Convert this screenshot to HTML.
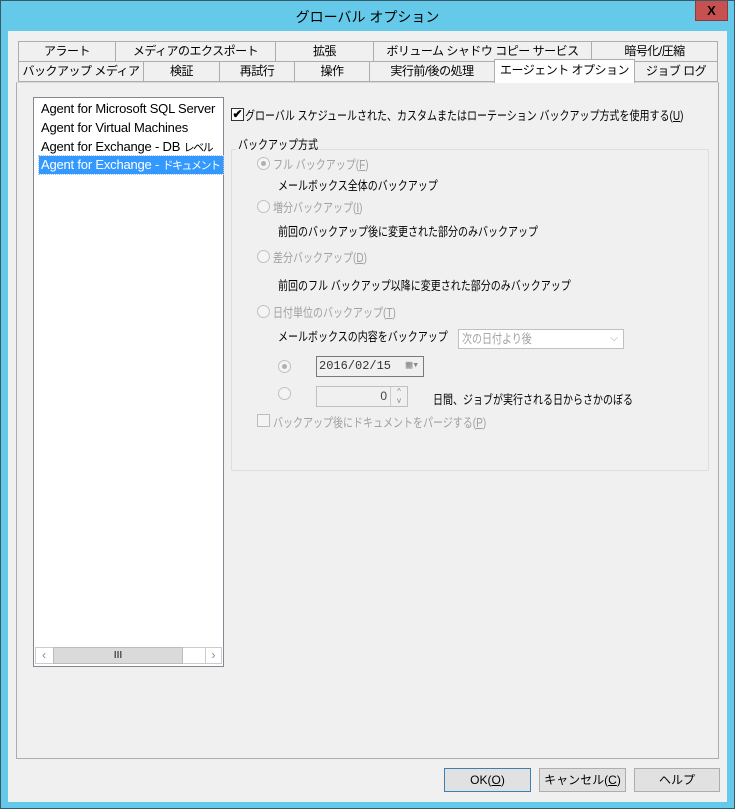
<!DOCTYPE html>
<html><head><meta charset="utf-8">
<style>
*{box-sizing:border-box;margin:0;padding:0}
body{width:735px;height:809px;position:relative;overflow:hidden;background:#65c9ea;font:12px "Liberation Sans","Noto Sans CJK JP",sans-serif;color:#000}
.a{position:absolute;white-space:nowrap}
.s{transform:scaleX(.8);transform-origin:0 0;font-size:12.5px}
.frame{left:0;top:0;width:735px;height:809px;border:1px solid #3a5a6a;background:#65c9ea}
.title{left:0;top:7px;width:735px;text-align:center;font-size:14px}
.close{left:695px;top:1px;width:33px;height:20px;background:#c75050;color:#000;font-weight:bold;text-align:center;line-height:20px;font-size:13px;border:1px solid #8e3a3a;border-top:none}
.client{left:8px;top:31px;width:719px;height:771px;background:#f0f0f0}
.tab{position:absolute;height:21px;border:1px solid #adadad;background:#f0f0f0;text-align:center;line-height:19px;font-size:12px;letter-spacing:-0.5px}
.panel{left:16px;top:82px;width:703px;height:677px;border:1px solid #adadad;border-top-color:#d9d9d9;background:#f0f0f0}
.list{left:33px;top:97px;width:191px;height:570px;border:1px solid #828790;background:#fff}
.item{position:absolute;left:7px;height:18px;line-height:18px;font-size:13px;letter-spacing:-0.2px}
.item span{font-size:11px;letter-spacing:-1.5px}
.dis{color:#a0a0a0}
.radio{position:absolute;width:13px;height:13px;border:1px solid #c0c0c0;border-radius:50%;background:#f4f4f4}
.radio.on::after{content:"";position:absolute;left:3px;top:3px;width:5px;height:5px;border-radius:50%;background:#b0b0b0}
.btn{position:absolute;top:768px;height:24px;border:1px solid #adadad;background:#e1e1e1;text-align:center;line-height:22px}
u{text-decoration:underline}
</style></head><body>
<div class="a frame"></div>
<div class="a title">グローバル オプション</div>
<div class="a close">X</div>
<div class="a client"></div>

<div class="tab" style="left:18px;top:41px;width:98px">アラート</div>
<div class="tab" style="left:115px;top:41px;width:161px">メディアのエクスポート</div>
<div class="tab" style="left:275px;top:41px;width:99px">拡張</div>
<div class="tab" style="left:373px;top:41px;width:219px">ボリューム シャドウ コピー サービス</div>
<div class="tab" style="left:591px;top:41px;width:127px">暗号化/圧縮</div>
<div class="tab" style="left:18px;top:61px;width:126px">バックアップ メディア</div>
<div class="tab" style="left:143px;top:61px;width:77px">検証</div>
<div class="tab" style="left:219px;top:61px;width:76px">再試行</div>
<div class="tab" style="left:294px;top:61px;width:76px">操作</div>
<div class="tab" style="left:369px;top:61px;width:126px">実行前/後の処理</div>
<div class="tab" style="left:634px;top:61px;width:84px">ジョブ ログ</div>

<div class="a panel"></div>
<div class="tab" style="left:494px;top:59px;width:141px;height:24px;background:#fff;border-bottom:none;line-height:21px">エージェント オプション</div>

<div class="a list">
 <div class="item" style="top:2px">Agent for Microsoft SQL Server</div>
 <div class="item" style="top:21px">Agent for Virtual Machines</div>
 <div class="item" style="top:40px">Agent for Exchange - DB <span>レベル</span></div>
 <div class="item" style="top:58px;left:5px;width:184px;background:#3399ff;color:#fff;outline:1px dotted #a0c8ff;padding-left:2px;overflow:hidden">Agent for Exchange - <span>ドキュメント</span></div>
 <div style="position:absolute;left:1px;top:549px;width:187px;height:17px;border:1px solid #ccc;background:#fff">
  <div style="position:absolute;left:0;top:0;width:16px;height:15px;color:#888;text-align:center;line-height:15px">‹</div>
  <div style="position:absolute;left:17px;top:-1px;width:130px;height:17px;background:#dadada;border:1px solid #bcbcbc;text-align:center;line-height:15px;color:#555;font-size:10px;font-weight:bold">III</div>
  <div style="position:absolute;right:0;top:0;width:16px;height:15px;color:#888;text-align:center;line-height:15px;border-left:1px solid #ccc">›</div>
 </div>
</div>

<div class="a" style="left:231px;top:108px;width:13px;height:13px;border:1px solid #333;background:#fff;font-size:12px;line-height:11px;text-align:center;font-weight:bold">✔</div>
<div class="a s" style="left:245px;top:105px">グローバル スケジュールされた、カスタムまたはローテーション バックアップ方式を使用する(<u>U</u>)</div>

<div class="a" style="left:231px;top:149px;width:478px;height:322px;border:1px solid #d5dfe5;border-radius:2px"></div>
<div class="a" style="left:236px;top:143px;width:56px;height:10px;background:#f0f0f0"></div>
<div class="a s" style="left:238px;top:134px">バックアップ方式</div>

<div class="radio on" style="left:257px;top:157px"></div>
<div class="a dis s" style="left:273px;top:154px">フル バックアップ(<u>F</u>)</div>
<div class="a s" style="left:278px;top:175px">メールボックス全体のバックアップ</div>

<div class="radio" style="left:257px;top:200px"></div>
<div class="a dis s" style="left:273px;top:197px">増分バックアップ(<u>I</u>)</div>
<div class="a s" style="left:278px;top:221px">前回のバックアップ後に変更された部分のみバックアップ</div>

<div class="radio" style="left:257px;top:250px"></div>
<div class="a dis s" style="left:273px;top:247px">差分バックアップ(<u>D</u>)</div>
<div class="a s" style="left:278px;top:275px">前回のフル バックアップ以降に変更された部分のみバックアップ</div>

<div class="radio" style="left:257px;top:305px"></div>
<div class="a dis s" style="left:273px;top:302px">日付単位のバックアップ(<u>T</u>)</div>
<div class="a s" style="left:278px;top:326px">メールボックスの内容をバックアップ</div>
<div class="a dis" style="left:458px;top:329px;width:166px;height:20px;border:1px solid #c0c0c0;background:#fff;padding-left:3px;line-height:18px"><span class="s" style="display:inline-block">次の日付より後</span><span style="position:absolute;right:5px;top:0;font-size:10px">⌵</span></div>

<div class="radio on" style="left:278px;top:360px"></div>
<div class="a" style="left:316px;top:356px;width:108px;height:21px;border:1px solid #7a7a7a;background:#f0f0f0;padding-left:2px;line-height:19px;font-family:'Liberation Mono',monospace;font-size:12px;color:#333">2016/02/15<span style="position:absolute;right:4px;top:0;color:#888;font-size:11px">▦▾</span></div>

<div class="radio" style="left:278px;top:387px"></div>
<div class="a" style="left:316px;top:386px;width:92px;height:21px;border:1px solid #c0c0c0;background:#f0f0f0;text-align:right;padding-right:20px;line-height:19px;color:#444">0
 <div style="position:absolute;right:0;top:0;width:17px;height:19px;border-left:1px solid #ccc;font-size:8px;line-height:9px;text-align:center;color:#888">^<br>v</div></div>
<div class="a s" style="left:433px;top:389px">日間、ジョブが実行される日からさかのぼる</div>

<div class="a" style="left:257px;top:414px;width:13px;height:13px;border:1px solid #bcbcbc;background:#f4f4f4"></div>
<div class="a dis s" style="left:273px;top:412px">バックアップ後にドキュメントをパージする(<u>P</u>)</div>

<div class="btn" style="left:444px;width:87px;border-color:#3c7fb1">OK(<u>O</u>)</div>
<div class="btn" style="left:539px;width:87px">キャンセル(<u>C</u>)</div>
<div class="btn" style="left:634px;width:86px">ヘルプ</div>
</body></html>
